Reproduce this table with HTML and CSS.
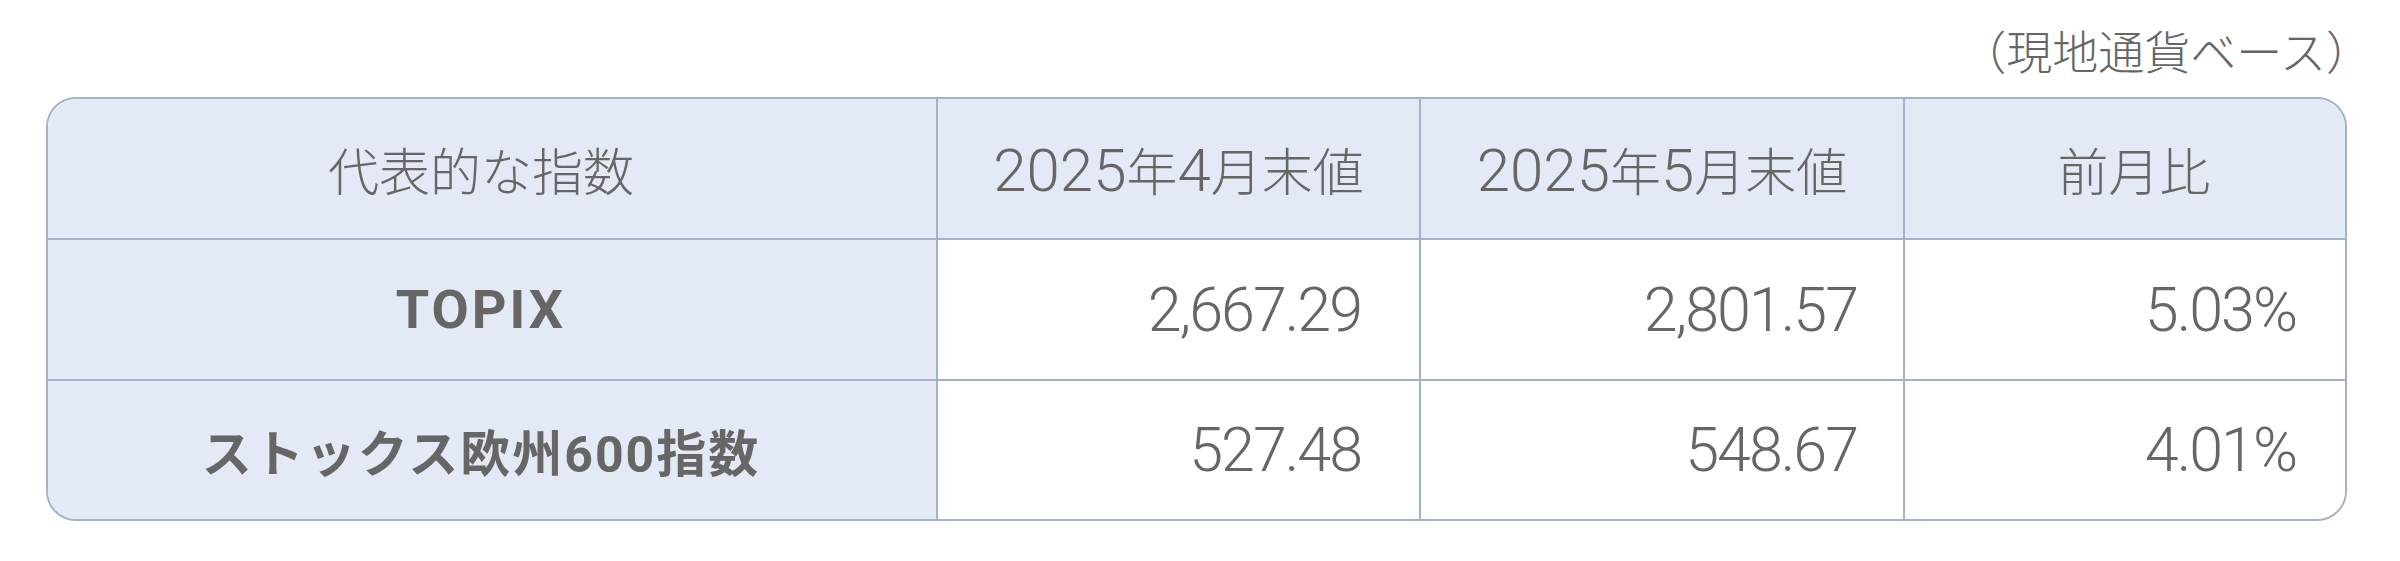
FILE: index.html
```html
<!DOCTYPE html>
<html lang="ja">
<head>
<meta charset="utf-8">
<title>代表的な指数</title>
<link rel="stylesheet" href="styles.css">
</head>
<body>
<div class="wrap">
  <p class="note">（現地通貨ベース）</p>
  <table class="idx">
    <colgroup>
      <col class="c1">
      <col class="c2">
      <col class="c3">
      <col class="c4">
    </colgroup>
    <thead>
      <tr>
        <th class="h-name">代表的な指数</th>
        <th><span class="num">2025</span>年<span class="num">4</span>月末値</th>
        <th><span class="num">2025</span>年<span class="num">5</span>月末値</th>
        <th class="h-chg">前月比</th>
      </tr>
    </thead>
    <tbody>
      <tr>
        <th class="name name-latin">TOPIX</th>
        <td class="v2">2,667.29</td>
        <td class="v3">2,801.57</td>
        <td class="v4">5.03%</td>
      </tr>
      <tr class="last">
        <th class="name">ストックス欧州600指数</th>
        <td class="v2">527.48</td>
        <td class="v3">548.67</td>
        <td class="v4">4.01%</td>
      </tr>
    </tbody>
  </table>
</div>
</body>
</html>
```

FILE: styles.css
```css
html, body {
  margin: 0;
  padding: 0;
  background: #ffffff;
}

body {
  font-family: "Roboto", "Noto Sans CJK JP", "Noto Sans", sans-serif;
  color: #666666;
}

.wrap {
  padding: 0 53px 0 46px;
}

.note {
  margin: 0;
  height: 97px;
  box-sizing: border-box;
  padding-top: 16px;
  text-align: right;
  font-family: "Noto Sans CJK JP", sans-serif;
  font-size: 46px;
  line-height: 66px;
  font-weight: 300;
  margin-right: -25px;
}

.idx {
  width: 2301px;
  table-layout: fixed;
  border-collapse: separate;
  border-spacing: 0;
  border: 2px solid #a4b1c7;
  border-radius: 30px;
  overflow: hidden;
}

.c1 { width: 890px; }
.c2 { width: 483px; }
.c3 { width: 484px; }
.c4 { width: 440px; }

.idx th,
.idx td {
  padding: 0;
  border-right: 2px solid #a4b1c7;
  border-bottom: 2px solid #a4b1c7;
  box-sizing: border-box;
}

.idx tr > :last-child {
  border-right: none;
}

.idx tr.last > * {
  border-bottom: none;
}

.idx thead th {
  background: #e3e9f5;
  height: 141px;
  font-family: "Noto Sans CJK JP", sans-serif;
  font-size: 51px;
  font-weight: 300;
  text-align: center;
  vertical-align: middle;
}

.idx thead th .num {
  font-family: "Roboto", sans-serif;
  font-size: 60px;
  font-weight: 300;
}

.idx thead th.h-name {
  padding-right: 22px;
}

.idx thead th.h-chg {
  padding-left: 18px;
}

.idx tbody tr {
  height: 141px;
}

.idx tbody tr.last {
  height: 138px;
}

.idx tbody th.name {
  background: #e3e9f5;
  font-size: 50px;
  font-weight: 700;
  letter-spacing: 2px;
  text-align: center;
  padding-right: 22px;
}

.idx tbody th.name-latin {
  font-size: 54px;
  letter-spacing: 3px;
}

.idx td {
  background: #ffffff;
  font-family: "Roboto", sans-serif;
  font-size: 61px;
  font-weight: 300;
  letter-spacing: -2px;
  text-align: right;
}

.idx td.v2 { padding-right: 58px; }
.idx td.v3 { padding-right: 46px; }
.idx td.v4 { padding-right: 49px; }
```
